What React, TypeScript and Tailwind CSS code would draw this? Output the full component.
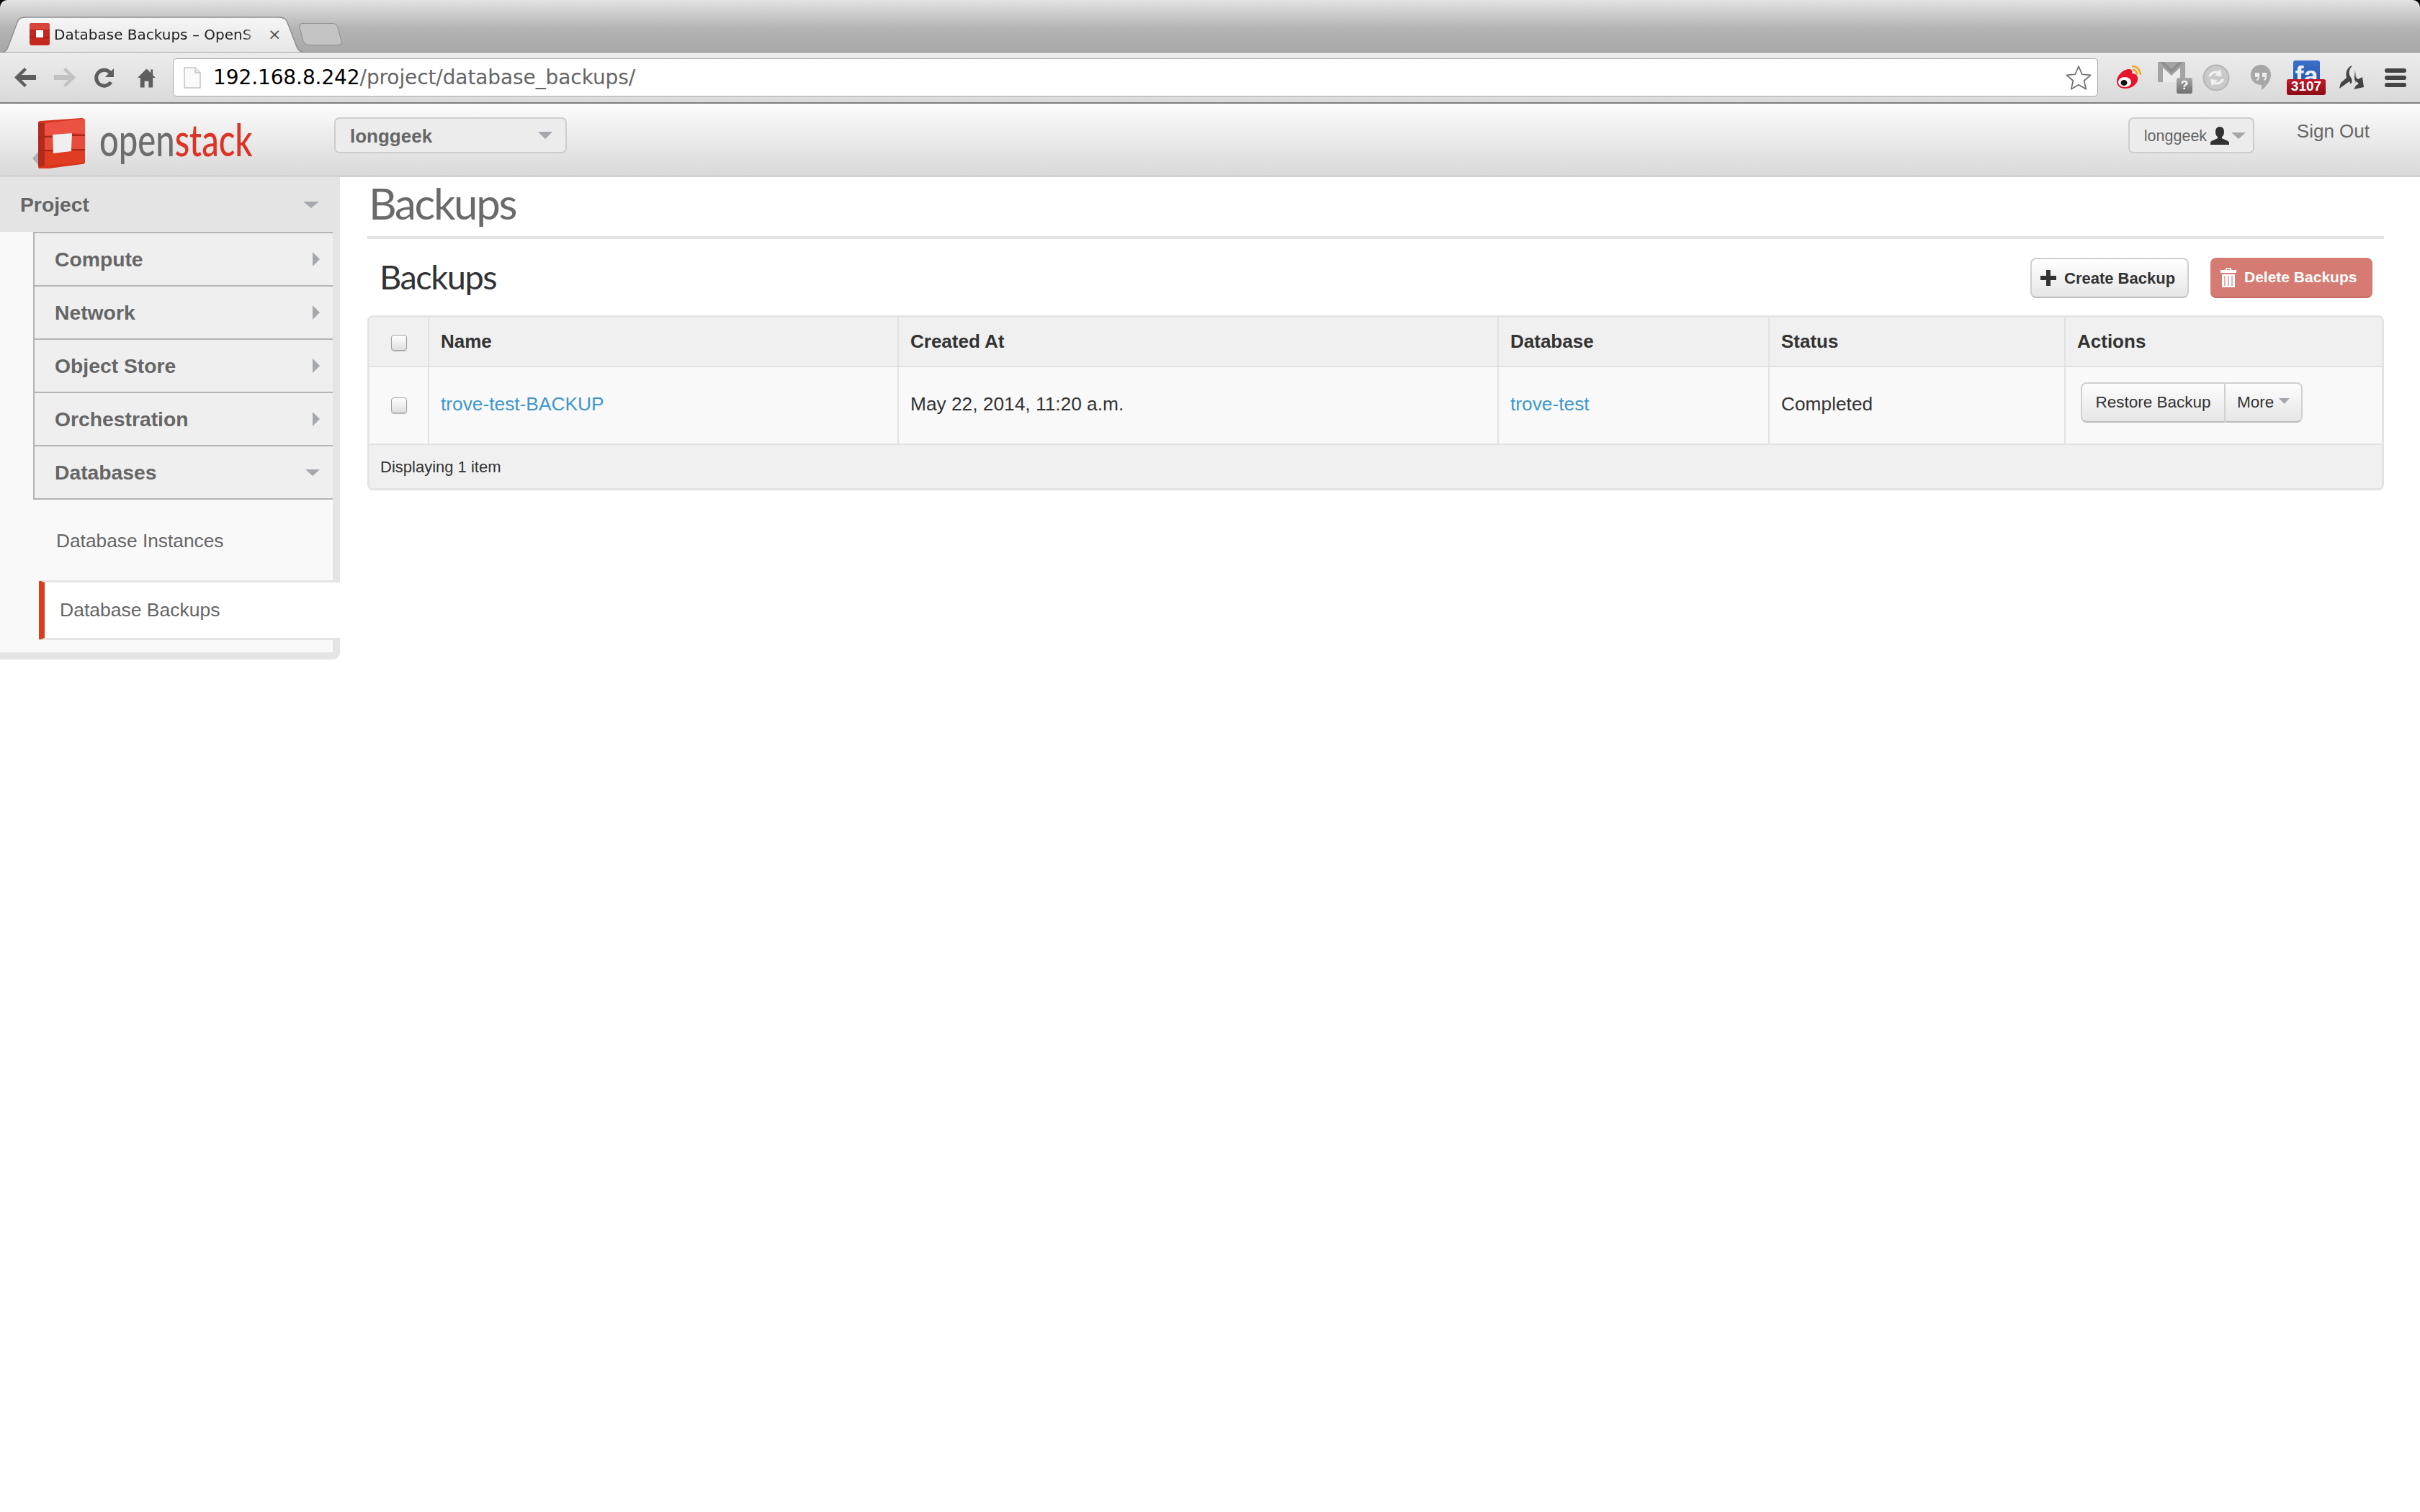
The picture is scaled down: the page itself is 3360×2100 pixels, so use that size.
import type { ReactNode } from "react";

const sans = "[font-family:'Liberation_Sans',Arial,sans-serif]";
const ui = "[font-family:'DejaVu_Sans',sans-serif]";
const display = "[font-family:'Lato',sans-serif]";

function Caret({ className }: { className: string }) {
  return (
    <svg viewBox="0 0 20 10" preserveAspectRatio="none" className={className}>
      <path d="M0 0H20L10 10Z" fill="#a4a8ac" />
    </svg>
  );
}

function ChromeIcons() {
  return (
    <div className="ml-[22px] flex items-center">
      {/* weibo */}
      <svg viewBox="0 0 38 34" className="h-[34px] w-[38px]">
        <path d="M4 22C4 14 13 5 21 5c4 0 5 3 4 6 6 0 9 4 8 9-1 7-9 12-17 12C8 32 4 28 4 22Z" fill="#e6162d" />
        <ellipse cx="15" cy="23" rx="9" ry="7" fill="#fff" />
        <ellipse cx="14" cy="24" rx="4.5" ry="4" fill="#111" />
        <path d="M25 1c7 0 12 5 12 12M26 6c4 0 6 3 6 7" fill="none" stroke="#f5a623" strokeWidth="2.6" />
      </svg>
      {/* gmail checker */}
      <div className="relative ml-[23px] h-[44px] w-[48px]">
        <svg viewBox="0 0 38 28" className="absolute left-0 top-0 h-[28px] w-[38px]">
          <rect width="38" height="28" fill="#a4a4a4" />
          <path d="M7 28V8l12 11L31 8v20Z" fill="#ececec" />
          <path d="M3 0h6l10 10L29 0h6L19 16Z" fill="#8e8e8e" />
        </svg>
        <span className={`absolute left-[26px] top-[22px] flex h-[22px] w-[22px] items-center justify-center rounded-[3px] bg-[linear-gradient(#a8a8a8,#6e6e6e)] text-[17px] font-bold text-white ${sans}`}>
          ?
        </span>
      </div>
      {/* sync */}
      <svg viewBox="0 0 38 38" className="ml-[14px] h-[38px] w-[38px]">
        <circle cx="19" cy="19" r="17.5" fill="#c9c9c9" stroke="#b5b5b5" strokeWidth="2" />
        <path d="M8 17c2-6 8-9 14-7l3-3 2 10-10-1 3-3c-4-1-7 1-8 4Z" fill="#f1f1f1" />
        <path d="M30 21c-2 6-8 9-14 7l-3 3-2-10 10 1-3 3c4 1 7-1 8-4Z" fill="#f1f1f1" />
      </svg>
      {/* hangouts */}
      <svg viewBox="0 0 28 36" className="ml-[29px] h-[36px] w-[28px]">
        <path d="M14 0c8 0 14 6 14 14 0 9-7 16-13 21v-7C6 28 0 22 0 14 0 6 6 0 14 0Z" fill="#a7a7a7" />
        <path d="M6 11h6v6c0 3-2 5-4 5v-2c1 0 2-1 2-3H6ZM16 11h6v6c0 3-2 5-4 5v-2c1 0 2-1 2-3h-4Z" fill="#ededed" />
      </svg>
      {/* feedly style badge */}
      <div className="relative ml-[22px] h-[48px] w-[54px]">
        <div className={`absolute left-[9px] top-0 h-[28px] w-[37px] overflow-hidden rounded-[3px] bg-[linear-gradient(#3b6fc9,#2a59ae)] text-center text-[36px] font-bold leading-[44px] text-[#e8f0fb] ${sans}`}>
          fa
        </div>
        <span className={`absolute bottom-0 left-0 flex h-[22px] w-[54px] items-center justify-center rounded-[3px] bg-[linear-gradient(#c2192c,#8c0c14)] text-[19px] font-bold text-white ${sans}`}>
          3107
        </span>
      </div>
      {/* arrows */}
      <svg viewBox="0 0 38 34" className="ml-[17px] h-[34px] w-[38px]">
        <path d="M20 0c-4 5-6 10-3 15 2 3 4 6 1 11l-2-4-14 10 2-8 8-7c-1-4-1-11 4-15 1-1 3-2 4-2Z" fill="#444" />
        <path d="M22 2c2 6 2 10 0 14l4 6-3 3c3-5 3-8 2-11 0-4-2-8-3-12Z" fill="#777" />
        <path d="M24 16l4 3 6-3 2 14-14 3 3-5 4-3-6-5Z" fill="#444" />
      </svg>
      {/* menu */}
      <div className="ml-[27px] flex h-[26px] w-[30px] flex-col justify-between">
        <div className="h-[6px] rounded-[3px] bg-[#444]" />
        <div className="h-[6px] rounded-[3px] bg-[#444]" />
        <div className="h-[6px] rounded-[3px] bg-[#444]" />
      </div>
    </div>
  );
}

function BrowserChrome() {
  return (
    <div className="bg-black">
      <div className="relative h-[73px] rounded-t-[10px] border-b border-[#8b8b8b] bg-[linear-gradient(#e2e2e2,#b4b4b4_55%,#a8a8a8)]">
        <div className="absolute bottom-[-1px] left-0 h-[50px] w-[424px]">
          <svg viewBox="0 0 424 50" preserveAspectRatio="none" className="absolute inset-0 h-full w-full">
            <defs>
              <linearGradient id="tabFill" x1="0" y1="0" x2="0" y2="1">
                <stop offset="0" stopColor="#f5f5f5" />
                <stop offset="1" stopColor="#e6e6e6" />
              </linearGradient>
            </defs>
            <path d="M0 50C8 50 10 46 12 40L24 8C26 3 28 1 36 1H386C394 1 397 3 399 8L412 42C414 47 417 50 424 50Z" fill="url(#tabFill)" stroke="#8f8f8f" strokeWidth="1.5" />
          </svg>
          <div className="relative flex h-full items-center pl-[40px] pb-[1px]">
            <svg viewBox="0 0 30 31" className="h-[31px] w-[30px] shrink-0">
              <rect x="1" y="0" width="28" height="31" rx="3" fill="#c5281f" />
              <rect x="1" y="0" width="28" height="9" rx="3" fill="#d8443a" />
              <rect x="10" y="10" width="10" height="10" fill="#fff" />
              <path d="M1 20h9v-1H1ZM20 20h9v-1h-9Z" fill="#8c1712" />
            </svg>
            <span className={`ml-[5px] w-[285px] whitespace-nowrap text-[20px] text-[#222] [mask-image:linear-gradient(to_right,black_92%,transparent)] ${ui}`}>
              Database Backups – OpenS
            </span>
            <span className={`ml-[12px] text-[22px] leading-none text-[#555] ${ui}`}>×</span>
          </div>
        </div>
        <div className="absolute left-[418px] top-[32px] h-[31px] w-[54px] skew-x-[15deg] rounded-[6px] border border-[#8d8d8d] bg-[#c4c4c4]" />
      </div>
      <div className="flex h-[71px] items-center border-b-2 border-[#7e7e7e] bg-[linear-gradient(#ececec,#dadada)] pl-[20px]">
        <svg viewBox="0 0 30 27" className="h-[27px] w-[30px]">
          <path d="M14 0l3 3-7 7h20v7H10l7 7-3 3L0 13.5Z" fill="#5e5e5e" />
        </svg>
        <svg viewBox="0 0 30 27" className="ml-[25px] h-[27px] w-[30px]">
          <path d="M16 0l-3 3 7 7H0v7h20l-7 7 3 3 14-13.5Z" fill="#c2c2c2" />
        </svg>
        <svg viewBox="0 0 28 30" className="ml-[26px] h-[30px] w-[28px]">
          <path d="M23 21A11 11 0 1 1 22 8" fill="none" stroke="#5e5e5e" strokeWidth="5" />
          <path d="M27 2v12H15Z" fill="#5e5e5e" />
        </svg>
        <svg viewBox="0 0 26 28" className="ml-[32px] h-[28px] w-[25px]">
          <path d="M13 1L0 14h4v14h6v-9h6v9h6V14h4l-4-4V2h-3v5Z" fill="#5e5e5e" />
        </svg>
        <div className="ml-[24px] flex h-[53px] w-[2673px] items-center rounded-[5px] border border-[#a8a8a8] bg-white pl-[14px] pr-[7px]">
          <svg viewBox="0 0 24 30" className="h-[30px] w-[24px]">
            <path d="M1 1h15l7 7v21H1Z" fill="#fafafa" stroke="#c4c4c4" strokeWidth="1.500" />
            <path d="M16 1v7h7" fill="#e8e8e8" stroke="#c4c4c4" strokeWidth="1.500" />
          </svg>
          <span className={`ml-[17px] text-[28px] tracking-[-0.1px] text-black ${ui}`}>
            192.168.8.242<span className="text-[#666]">/project/database_backups/</span>
          </span>
          <svg viewBox="0 0 24 24" className="ml-auto h-[38px] w-[38px]">
            <path d="M12 2l3 7 7.500.7-5.700 5 1.700 7.300L12 18.200 5.500 22l1.700-7.300-5.700-5L9 9Z" fill="#fff" stroke="#707070" strokeWidth="1.100" strokeLinejoin="round" />
          </svg>
        </div>
        <ChromeIcons />
      </div>
    </div>
  );
}

function OpenStackLogo() {
  return (
    <svg viewBox="0 0 75 72" className="h-[72px] w-[75px]">
      <path d="M9 48L0 58l11 12Z" fill="#b0b0b0" />
      <path d="M8 9c0-2 1-3 3-3l57-4c3 0 5 1 5 4l0 56c0 3-1 4-4 4l-54 7c-5 0-7-1-7-4Z" fill="#d9351d" />
      <path d="M8 8l9 1v59l-7 2-2-3Z" fill="#b22a1b" />
      <path d="M17 9l53-6c2 0 3 1 3 3v18l-18-1-27 2-11 2Z" fill="#ec5244" />
      <path d="M17 29h11v17H17ZM55 27h18v18H55Z" fill="#e84a3c" />
      <path d="M8 27h20v2H8ZM8 46h21v2H8ZM55 25h18v2H55ZM54 45h19v2H54Z" fill="#a9251a" />
      <path d="M17 49l56-2v17l-56 4Z" fill="#e03c22" />
      <path d="M28 25l27-2-1 25-25 3Z" fill="#efefef" />
    </svg>
  );
}

function AppHeader() {
  return (
    <header className={`flex h-[102px] items-start border-b-[3px] border-[#d2d2d2] bg-[linear-gradient(#fcfcfc,#d9d9d9)] ${sans}`}>
      <div className="ml-[45px] mt-[18px]">
        <OpenStackLogo />
      </div>
      <div className="ml-[18px] mt-[16px] flex h-[66px] w-[229px] items-center">
        <span className={`origin-left scale-x-[0.76] whitespace-nowrap text-[62px] font-medium leading-none ${display}`}>
          <span className="text-[#6d6d6d]">open</span>
          <span className="text-[#dd3327]">stack</span>
        </span>
      </div>
      <div className="ml-[97px] mt-[19px] flex h-[50px] w-[323px] items-center justify-between rounded-[7px] border-2 border-[#cdcdcd] bg-[#ececec] pl-[20px] pr-[18px]">
        <span className="pt-[3px] text-[26px] font-bold text-[#666]">longgeek</span>
        <Caret className="h-[10px] w-[20px]" />
      </div>
      <div className="ml-auto mt-[19px] flex h-[50px] w-[175px] items-center rounded-[7px] border-2 border-[#cdcdcd] bg-[#ececec] pl-[20px]">
        <span className="pt-[3px] text-[21.500px] text-[#666]">longgeek</span>
        <svg viewBox="0 0 26 25" className="ml-[5px] h-[25px] w-[26px]">
          <path d="M13 0c4 0 6 3 6 7 0 3-1 6-3 7v2c3 2 9 3 10 6v3H0v-3c1-3 7-4 10-6v-2c-2-1-3-4-3-7 0-4 2-7 6-7Z" fill="#333" />
        </svg>
        <Caret className="ml-[3px] h-[9px] w-[20px]" />
      </div>
      <span className="ml-[59px] mr-[70px] mt-[19px] text-[26px] text-[#666]">Sign Out</span>
    </header>
  );
}

const navGroups = ["Compute", "Network", "Object Store", "Orchestration"];

function NavRow({ label, open }: { label: string; open?: boolean }) {
  return (
    <div className="flex h-[74px] items-center justify-between border-b-2 border-[#b4b4b4] bg-[#efefef] pl-[28px] pr-[18px] text-[28.300px] font-bold text-[#666]">
      <span>{label}</span>
      {open ? (
        <Caret className="h-[9px] w-[20px]" />
      ) : (
        <svg viewBox="0 0 10 20" className="h-[20px] w-[10px]">
          <path d="M0 0L10 10 0 20Z" fill="#a4a8ac" />
        </svg>
      )}
    </div>
  );
}

function Sidebar() {
  return (
    <aside className={`h-[670px] rounded-br-[10px] bg-[#e4e4e4] ${sans}`}>
      <div className="flex h-[76px] items-center justify-between pl-[28px] pr-[29px] text-[28.300px] font-bold text-[#666]">
        <span>Project</span>
        <Caret className="h-[9px] w-[22px]" />
      </div>
      <div className="mr-[10px] h-[584px] bg-[#f9f9f9]">
        <div className="ml-[46px] border-l-2 border-t-2 border-[#b4b4b4]">
          {navGroups.map((group) => (
            <NavRow key={group} label={group} />
          ))}
          <NavRow label="Databases" open />
        </div>
        <div className="ml-[78px] flex h-[112px] items-center pt-[3px] text-[26.300px] text-[#666]">Database Instances</div>
        <div className="relative ml-[54px] mr-[-10px] flex h-[83px] items-center rounded-l-[3px] border-y-[3px] border-l-8 border-[#e4e4e4] border-l-[#dc3c1e] bg-white pl-[21px] text-[26.500px] text-[#666]">
          Database Backups
        </div>
      </div>
    </aside>
  );
}

function Checkbox() {
  return <div className="h-[22px] w-[22px] rounded-[4px] border border-[#a0a0a0] bg-[linear-gradient(#fff,#dedede)] shadow-[0_1px_1px_#bbb]" />;
}

const cols = "grid grid-cols-[81px_652px_833px_376px_411px_1fr]";

function Cell({ children, className = "" }: { children?: ReactNode; className?: string }) {
  return <div className={`flex items-center border-l-2 border-[#e2e2e2] pl-[16px] ${className}`}>{children}</div>;
}

function BackupsTable() {
  return (
    <div className="mt-[24px] overflow-hidden rounded-[8px] border-[3px] border-[#e3e3e3] text-[#333]">
      <div className={`${cols} h-[69px] border-b-2 border-[#e2e2e2] bg-[#f0f0f0] text-[26px] font-bold`}>
        <div className="flex items-center justify-center pt-[3px]">
          <Checkbox />
        </div>
        {["Name", "Created At", "Database", "Status", "Actions"].map((h) => (
          <Cell key={h}>{h}</Cell>
        ))}
      </div>
      <div className={`${cols} h-[108px] border-b-2 border-[#e2e2e2] bg-[#f9f9f9] text-[26.300px]`}>
        <div className="flex items-center justify-center">
          <Checkbox />
        </div>
        <Cell className="pb-[3px] text-[#4096cc]">trove-test-BACKUP</Cell>
        <Cell className="pb-[3px]">May 22, 2014, 11:20 a.m.</Cell>
        <Cell className="pb-[3px] text-[#4096cc]">trove-test</Cell>
        <Cell className="pb-[3px]">Completed</Cell>
        <Cell className="pb-[3px] pl-[21px]">
          <div className="mb-[6px] flex h-[56px] text-[22.500px]">
            <div className="flex w-[201px] items-center justify-center rounded-l-[8px] border-2 border-[#d0d0d0] border-b-[#bcbcbc] bg-[linear-gradient(#fdfdfd,#e6e6e6)]">
              Restore Backup
            </div>
            <div className="flex w-[107px] items-center rounded-r-[8px] border-2 border-l-0 border-[#d0d0d0] border-b-[#bcbcbc] bg-[linear-gradient(#fdfdfd,#e6e6e6)] pl-[16px]">
              More
              <Caret className="mb-[4px] ml-[7px] h-[8px] w-[15px]" />
            </div>
          </div>
        </Cell>
      </div>
      <div className="flex h-[60px] items-center bg-[#f0f0f0] pl-[15px] text-[22px]">Displaying 1 item</div>
    </div>
  );
}

function Content() {
  return (
    <main className={`pl-[38px] pr-[50px] ${sans}`}>
      <div className="h-[86px] border-b-4 border-[#e4e4e4]">
        <h1 className={`pl-[2px] text-[60px] leading-[72px] tracking-[-2.300px] text-[#6a6a6a] ${display}`}>Backups</h1>
      </div>
      <div className="mt-[26px] flex h-[56px] items-center justify-between pl-[17px] pr-[16px]">
        <h2 className={`pb-[4px] text-[47px] tracking-[-1.5px] text-[#333] ${display}`}>Backups</h2>
        <div className="flex gap-[30px] text-[22px] font-bold">
          <div className="flex h-[56px] w-[220px] items-center rounded-[8px] border-2 border-[#d0d0d0] border-b-[#bcbcbc] bg-[linear-gradient(#fff,#e6e6e6)] pl-[12px] text-[#333]">
            <svg viewBox="0 0 22 22" className="h-[22px] w-[22px]">
              <path d="M8 0h6v8h8v6h-8v8H8v-8H0V8h8Z" fill="#333" />
            </svg>
            <span className="ml-[11px]">Create Backup</span>
          </div>
          <div className="flex h-[56px] w-[225px] items-center rounded-[8px] border-b-2 border-[#c46b63] bg-[#d67b73] pl-[14px] text-[21px] text-white">
            <svg viewBox="0 0 22 27" className="h-[27px] w-[22px]">
              <path d="M7 0h8v3h7v4H0V3h7ZM9 1.500V3h4V1.500ZM2 9h18v18H2Z" fill="#fff" />
              <path d="M6 11v14M11 11v14M16 11v14" stroke="#d67b73" strokeWidth="1.200" />
            </svg>
            <span className="ml-[11px]">Delete Backups</span>
          </div>
        </div>
      </div>
      <BackupsTable />
    </main>
  );
}

export default function App() {
  return (
    <div className="min-h-screen bg-white">
      <BrowserChrome />
      <AppHeader />
      <div className="grid grid-cols-[472px_1fr]">
        <Sidebar />
        <Content />
      </div>
    </div>
  );
}
